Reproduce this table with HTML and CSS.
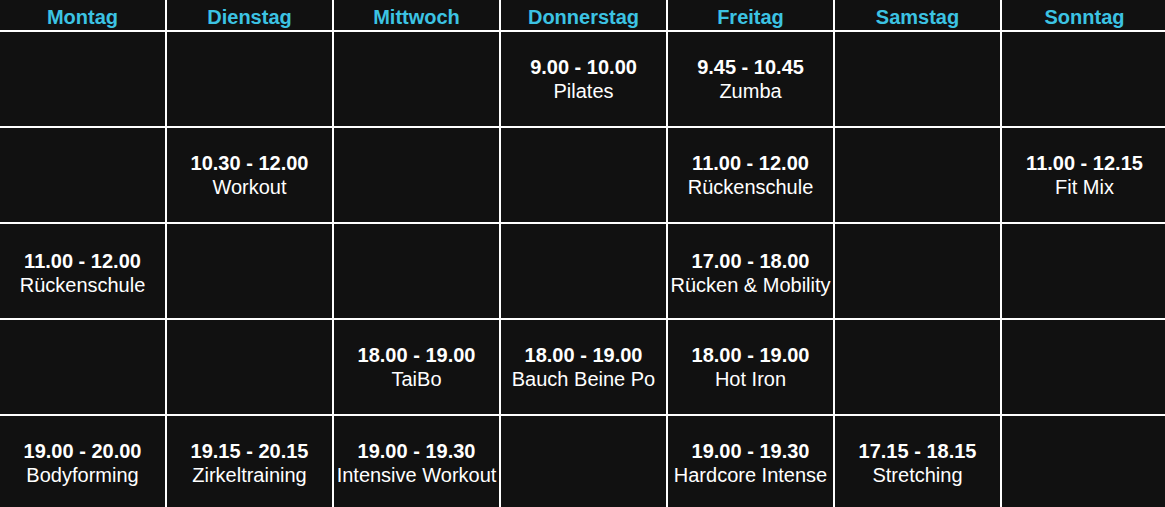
FILE: index.html
```html
<!DOCTYPE html>
<html lang="de">
<head>
<meta charset="utf-8">
<title>Kursplan</title>
<link rel="stylesheet" href="styles.css">
</head>
<body>
<div class="plan">
  <div class="head">Montag</div>
  <div class="head">Dienstag</div>
  <div class="head">Mittwoch</div>
  <div class="head">Donnerstag</div>
  <div class="head">Freitag</div>
  <div class="head">Samstag</div>
  <div class="head">Sonntag</div>

  <div class="cell"></div>
  <div class="cell"></div>
  <div class="cell"></div>
  <div class="cell"><b>9.00 - 10.00</b><span>Pilates</span></div>
  <div class="cell"><b>9.45 - 10.45</b><span>Zumba</span></div>
  <div class="cell"></div>
  <div class="cell"></div>

  <div class="cell"></div>
  <div class="cell"><b>10.30 - 12.00</b><span>Workout</span></div>
  <div class="cell"></div>
  <div class="cell"></div>
  <div class="cell"><b>11.00 - 12.00</b><span>Rückenschule</span></div>
  <div class="cell"></div>
  <div class="cell"><b>11.00 - 12.15</b><span>Fit Mix</span></div>

  <div class="cell low"><b>11.00 - 12.00</b><span>Rückenschule</span></div>
  <div class="cell low"></div>
  <div class="cell low"></div>
  <div class="cell low"></div>
  <div class="cell low"><b>17.00 - 18.00</b><span>Rücken &amp; Mobility</span></div>
  <div class="cell low"></div>
  <div class="cell low"></div>

  <div class="cell"></div>
  <div class="cell"></div>
  <div class="cell"><b>18.00 - 19.00</b><span>TaiBo</span></div>
  <div class="cell"><b>18.00 - 19.00</b><span>Bauch Beine Po</span></div>
  <div class="cell"><b>18.00 - 19.00</b><span>Hot Iron</span></div>
  <div class="cell"></div>
  <div class="cell"></div>

  <div class="cell"><b>19.00 - 20.00</b><span>Bodyforming</span></div>
  <div class="cell"><b>19.15 - 20.15</b><span>Zirkeltraining</span></div>
  <div class="cell"><b>19.00 - 19.30</b><span>Intensive Workout</span></div>
  <div class="cell"></div>
  <div class="cell"><b>19.00 - 19.30</b><span>Hardcore Intense</span></div>
  <div class="cell"><b>17.15 - 18.15</b><span>Stretching</span></div>
  <div class="cell"></div>
</div>
</body>
</html>
```

FILE: styles.css
```css
html, body {
  margin: 0;
  padding: 0;
  background: #111111;
  overflow: hidden;
}

body {
  font-family: "Liberation Sans", Arial, sans-serif;
  color: #ffffff;
}

.plan {
  display: grid;
  grid-template-columns: repeat(7, 165px);
  grid-template-rows: 30px repeat(5, 94px);
  gap: 2px;
  background: #ffffff;
  width: 1167px;
}

.head {
  background: #111111;
  color: #3cc3e3;
  font-weight: bold;
  font-size: 20px;
  display: flex;
  align-items: center;
  justify-content: center;
  padding-top: 4px;
  box-sizing: border-box;
}

.cell {
  background: #111111;
  display: flex;
  flex-direction: column;
  align-items: center;
  justify-content: center;
  font-size: 20px;
  line-height: 24px;
  text-align: center;
  white-space: nowrap;
}

.cell.low {
  padding-top: 4px;
  box-sizing: border-box;
}

.cell b {
  font-weight: bold;
}
```
